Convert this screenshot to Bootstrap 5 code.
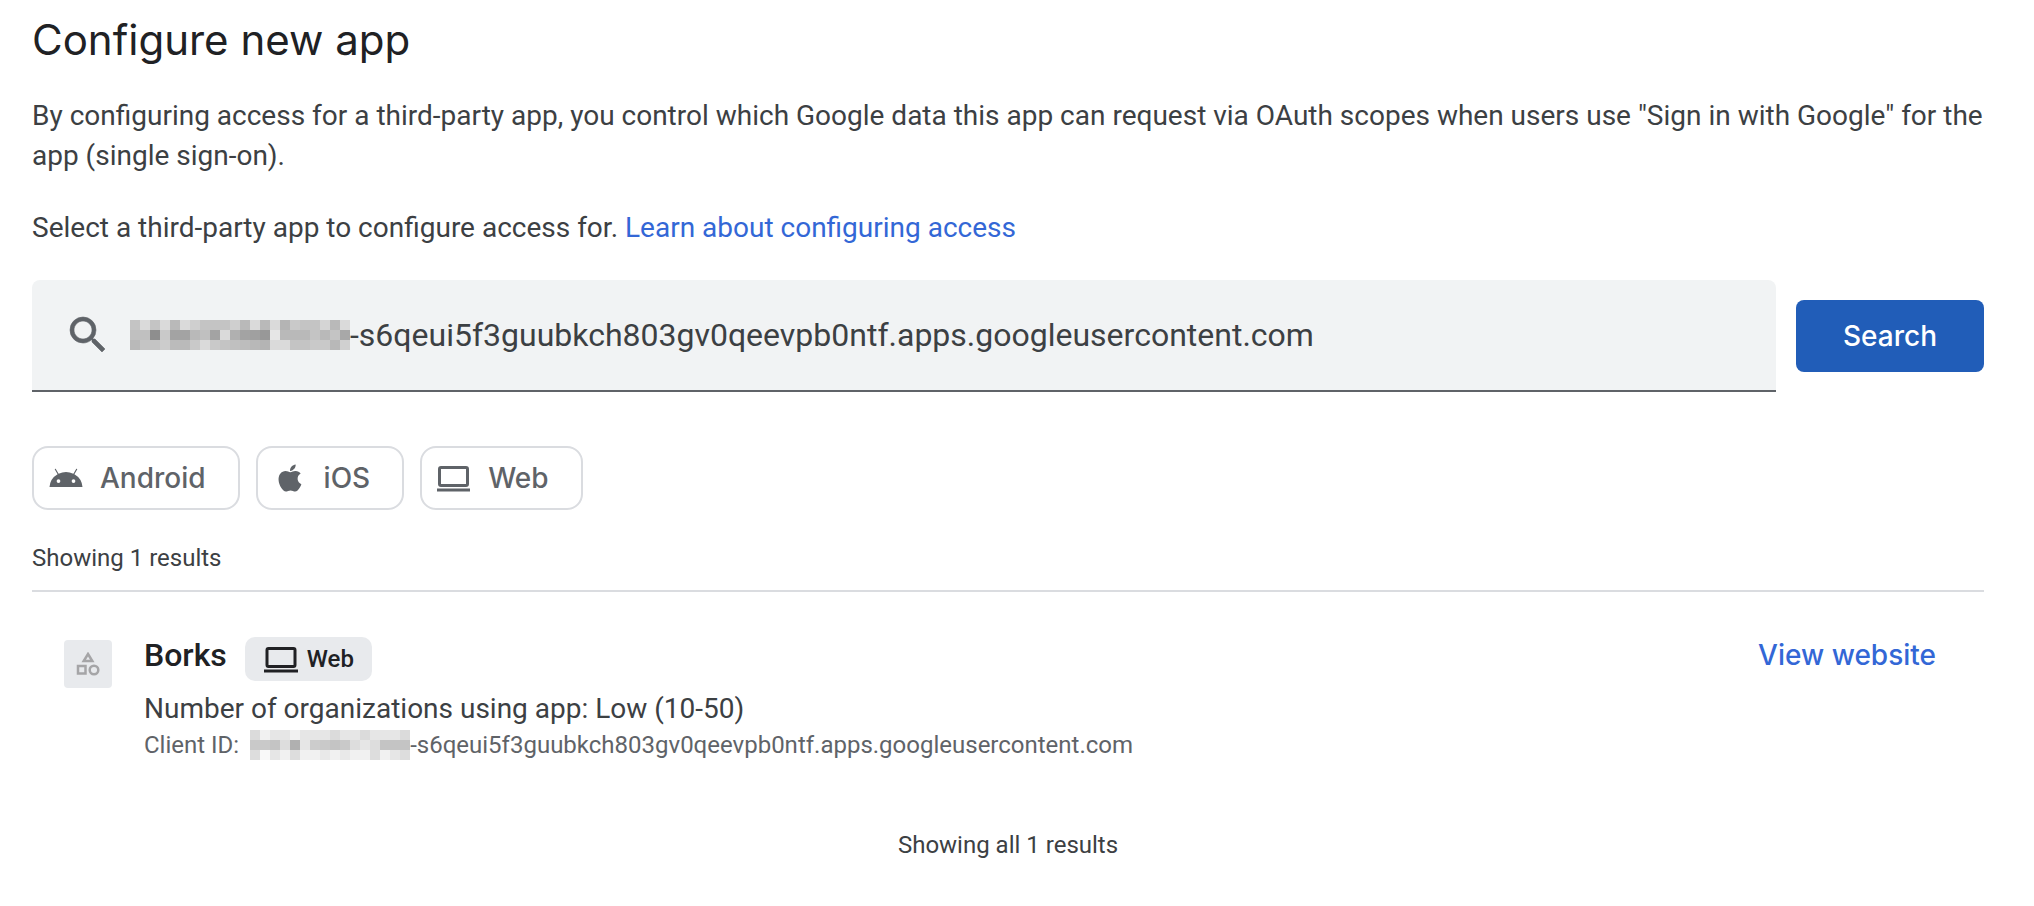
<!DOCTYPE html>
<html lang="en">
<head>
<meta charset="utf-8">
<meta name="viewport" content="width=device-width, initial-scale=1">
<title>Configure new app</title>
<link rel="stylesheet" href="https://cdn.jsdelivr.net/npm/bootstrap@5.3.0/dist/css/bootstrap.min.css">
<style>
  body { font-family: Roboto, "Liberation Sans", sans-serif; font-size: 28px; line-height: 40px; color: #3c4043; background: #fff; }
  .page { padding: 12px 50px 24px 32px; }
  .page-title { font-family: Inter, sans-serif; font-size: 42px; line-height: 56px; color: #202124; margin-bottom: 28px; font-weight: 400; }
  .intro { margin-bottom: 32px; }
  a, a:hover { color: #3367d6; text-decoration: none; }
  .lookup { gap: 20px; margin-top: 32px; margin-bottom: 54px; }
  .search-box { height: 112px; background: #f1f3f4; border-bottom: 2px solid #5f6368; border-radius: 8px 8px 0 0; padding: 0 32px; }
  .search-box svg { flex: none; }
  .search-icon { margin-right: 18px; }
  .search-box input, .search-box input:focus { font-size: 32px; line-height: 40px; color: #3c4043; background: transparent; border: 0; box-shadow: none; padding: 0; border-radius: 0; }
  .btn-search, .btn-chip, .view-link { font-family: Inter, sans-serif; font-size: 28px; font-weight: 500; line-height: 36px; }
  .btn-search, .btn-search:hover { width: 188px; height: 72px; background: #215db8; color: #fff; border-radius: 8px; padding: 0; }
  .chips { gap: 16px; }
  .btn-chip { height: 64px; border: 2px solid #dadce0; border-radius: 16px; color: #5f6368; padding: 0 32px 0 14px; gap: 16px; }
  .count { font-size: 24px; line-height: 32px; }
  .count-top { margin-top: 32px; margin-bottom: 16px; }
  .count-end { margin-top: 68px; }
  .results { border-top: 2px solid #dadce0; padding: 45px 48px 0 32px; }
  .app-icon { width: 48px; height: 48px; border-radius: 4px; background: #e8eaed; margin-top: 3px; margin-right: 32px; }
  .app-head { gap: 18px; margin-bottom: 8px; }
  .app-name { font-size: 32px; line-height: 36px; font-weight: 500; color: #202124; }
  .platform { height: 44px; border-radius: 10px; background: #e8eaed; color: #202124; font-size: 24px; font-weight: 500; padding: 0 18px; gap: 8px; }
  .client { font-size: 24px; line-height: 32px; color: #5f6368; }
  .client .mosaic { margin-left: 11px; }
</style>
</head>
<body>
<main class="page">
  <h1 class="page-title">Configure new app</h1>
  <p class="intro">By configuring access for a third-party app, you control which Google data this app can request via OAuth scopes when users use "Sign in with Google" for the app (single sign-on).</p>
  <p class="mb-0">Select a third-party app to configure access for. <a href="#">Learn about configuring access</a></p>

  <form class="lookup d-flex align-items-center" onsubmit="return false">
    <div class="search-box d-flex align-items-center flex-grow-1">
      <label for="q" class="search-icon d-flex" aria-label="Search apps"><svg width="48" height="48" viewBox="0 0 24 24" fill="#5f6368" stroke="#5f6368" stroke-width=".3"><path d="M15.500 14h-.79l-.28-.27A6.470 6.470 0 0 0 16 9.500 6.500 6.500 0 1 0 9.500 16c1.610 0 3.090-.59 4.230-1.570l.27.28v.79l5 4.990L20.490 19l-4.990-5zm-6 0C7.010 14 5 11.990 5 9.500S7.010 5 9.500 5 14 7.010 14 9.500 11.990 14 9.500 14z"/></svg></label>
      <svg class="mosaic" width="220" height="30" shape-rendering="crispEdges" data-rows="c4 da c4 da b9 da cf c4 c4 c4 cf b9 da b9 da b4 c9 c4 c4 d5 b9 da|c0 c0 8e c9 a3 a3 b9 c0 a3 da b0 a3 a0 98 e6 b9 b9 b9 c4 b9 c4 a8|b9 c4 c4 cc bb ba c9 da c9 c4 c0 bd b8 b4 da da c4 c4 c9 c9 b8 d0"></svg>
      <input id="q" type="text" class="form-control" value="-s6qeui5f3guubkch803gv0qeevpb0ntf.apps.googleusercontent.com">
    </div>
    <button type="submit" class="btn btn-search">Search</button>
  </form>

  <div class="chips d-flex">
    <button type="button" class="btn btn-chip d-flex align-items-center"><svg width="36" height="36" viewBox="0 0 24 24" fill="currentColor"><path d="M17.600 9.480l1.840-3.180a.38.38 0 0 0-.65-.38l-1.880 3.240a11.430 11.430 0 0 0-9.820 0L5.210 5.920a.38.38 0 0 0-.65.380L6.400 9.480A10.800 10.800 0 0 0 1 18h22a10.800 10.800 0 0 0-5.400-8.520zM7 15.250a1.250 1.250 0 1 1 0-2.500 1.250 1.250 0 0 1 0 2.500zm10 0a1.250 1.250 0 1 1 0-2.500 1.250 1.250 0 0 1 0 2.500z"/></svg>Android</button>
    <button type="button" class="btn btn-chip d-flex align-items-center"><svg width="36" height="36" viewBox="0 0 24 24" fill="currentColor"><path d="M17.050 20.280c-.98.95-2.050.8-3.080.35-1.090-.46-2.090-.48-3.240 0-1.440.62-2.200.44-3.060-.35C2.790 15.250 3.510 7.590 9.050 7.310c1.350.07 2.290.74 3.080.8 1.180-.24 2.310-.93 3.570-.84 1.510.12 2.650.72 3.400 1.800-3.120 1.870-2.380 5.980.48 7.130-.57 1.500-1.310 2.990-2.540 4.090zM12.030 7.250c-.15-2.230 1.660-4.070 3.740-4.250.29 2.580-2.340 4.500-3.740 4.250z"/></svg>iOS</button>
    <button type="button" class="btn btn-chip d-flex align-items-center"><svg width="36" height="36" viewBox="0 0 36 36"><rect x="3.500" y="7.500" width="28" height="18" rx="1.500" fill="none" stroke="currentColor" stroke-width="3"/><path d="M1 28.500h33v3H1z" fill="currentColor"/></svg>Web</button>
  </div>

  <p class="count count-top">Showing 1 results</p>
  <section class="results d-flex align-items-start">
    <div class="app-icon d-flex align-items-center justify-content-center"><svg width="24" height="24" viewBox="0 0 24 24" fill="none" stroke="#a5a5a7" stroke-width="2.500"><path d="M12 2l4.300 7H7.700z"/><rect x="2" y="14" width="7.500" height="7.500"/><circle cx="18" cy="18" r="4.300"/></svg></div>
    <div class="flex-grow-1">
      <div class="app-head d-flex align-items-start"><h2 class="app-name mb-0">Borks</h2><span class="platform d-flex align-items-center"><svg width="36" height="30" viewBox="0 0 36 30" fill="none"><rect x="4" y="4.500" width="28" height="18" rx="1.500" stroke="currentColor" stroke-width="3"/><path d="M1 25.500h34v3H1z" fill="currentColor"/></svg>Web</span></div>
      <div>Number of organizations using app: Low (10-50)</div>
      <div class="client d-flex align-items-center">Client ID:<svg class="mosaic" width="160" height="30" shape-rendering="crispEdges" data-rows="db f1 e6 e6 f1 e6 e6 e6 db e6 e6 db e6 e6 e6 db|c9 c9 c4 dd b0 e6 cc c9 c4 c9 dd e6 dd c4 c4 c4|dd f9 e6 f1 dd f1 f1 e9 f1 e9 f1 f1 dd f1 e6 dd"></svg>-s6qeui5f3guubkch803gv0qeevpb0ntf.apps.googleusercontent.com</div>
    </div>
    <a href="#" class="view-link">View website</a>
  </section>
  <p class="count count-end text-center mb-0">Showing all 1 results</p>
</main>
<script src="https://cdn.jsdelivr.net/npm/bootstrap@5.3.0/dist/js/bootstrap.bundle.min.js"></script>
<script>
  // Fill each redaction block with its 10px grey cells.
  document.querySelectorAll('.mosaic').forEach(function (svg) {
    svg.innerHTML = svg.dataset.rows.split('|').map(function (row, y) {
      return row.split(' ').map(function (g, x) {
        return '<rect x="' + x * 10 + '" y="' + y * 10 + '" width="10" height="10" fill="#' + g + g + g + '"/>';
      }).join('');
    }).join('');
  });
</script>
</body>
</html>
